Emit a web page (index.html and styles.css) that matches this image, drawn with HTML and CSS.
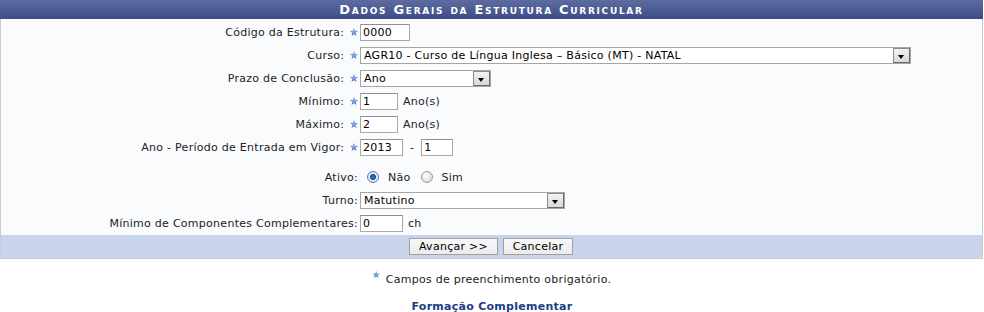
FILE: index.html
```html
<!DOCTYPE html>
<html>
<head>
<meta charset="utf-8">
<link rel="stylesheet" href="styles.css">
</head>
<body>
<div class="form">
  <div class="caption">Dados Gerais da Estrutura Curricular</div>
  <div class="fields">
    <div class="row"><div class="lbl">Código da Estrutura: <span class="star"></span></div><div class="val"><span class="inp w50">0000</span></div></div>
    <div class="row"><div class="lbl">Curso: <span class="star"></span></div><div class="val"><span class="sel w550"><span class="opt">AGR10 - Curso de Língua Inglesa – Básico (MT) - NATAL</span><span class="arrow"></span></span></div></div>
    <div class="row"><div class="lbl">Prazo de Conclusão: <span class="star"></span></div><div class="val"><span class="sel w130"><span class="opt">Ano</span><span class="arrow"></span></span></div></div>
    <div class="row"><div class="lbl">Mínimo: <span class="star"></span></div><div class="val"><span class="inp w38">1</span><span class="unit">Ano(s)</span></div></div>
    <div class="row"><div class="lbl">Máximo: <span class="star"></span></div><div class="val"><span class="inp w38">2</span><span class="unit">Ano(s)</span></div></div>
    <div class="row"><div class="lbl">Ano - Período de Entrada em Vigor: <span class="star"></span></div><div class="val"><span class="inp w43">2013</span><span class="dash">-</span><span class="inp w32">1</span></div></div>
    <div class="row tall"><div class="lbl">Ativo:</div><div class="val radios"><span class="radio on"></span><span class="rtext">Não</span><span class="radio"></span><span class="rtext">Sim</span></div></div>
    <div class="row"><div class="lbl">Turno:</div><div class="val"><span class="sel w204"><span class="opt">Matutino</span><span class="arrow"></span></span></div></div>
    <div class="row"><div class="lbl">Mínimo de Componentes Complementares:</div><div class="val"><span class="inp w43">0</span><span class="unit">ch</span></div></div>
  </div>
  <div class="actions">
    <span class="btn b1">Avançar &gt;&gt;</span>
    <span class="btn b2">Cancelar</span>
  </div>
</div>
<p class="note"><span class="star small"></span>Campos de preenchimento obrigatório.</p>
<p class="link">Formação Complementar</p>
</body>
</html>
```
FILE: styles.css
```css
html, body { margin: 0; padding: 0; background: #fff; }
body { font-family: "DejaVu Sans", Verdana, sans-serif; font-size: 11px; letter-spacing: 0.27px; color: #222; }
.form { width: 983px; border: 1px solid #ccc; border-top: none; box-sizing: border-box; background: #f9fbfd; }
.caption { height: 19px; line-height: 19px; margin: 0 -1px; text-align: center; color: #fff; font-weight: bold; font-variant: small-caps; font-size: 13px; letter-spacing: 1.7px; background: linear-gradient(#5d6ca0, #3e4c86); }
.fields { padding-top: 2px; }
.row { display: grid; grid-template-columns: 357px 1fr; height: 23px; align-items: center; }
.row.tall { height: 30px; padding-top: 6px; box-sizing: border-box; }
.lbl { text-align: right; white-space: nowrap; }
.val { display: flex; align-items: center; padding-left: 2px; }
.star { display: inline-block; width: 8px; height: 8px; vertical-align: 0px; margin-left: 2px; background: radial-gradient(circle at 50% 40%, #8fb0e8, #2f5db8); clip-path: polygon(50% 0, 63% 35%, 100% 38%, 71% 60%, 81% 100%, 50% 77%, 19% 100%, 29% 60%, 0 38%, 37% 35%); }
.inp { display: inline-block; box-sizing: border-box; height: 17px; line-height: 15px; border: 1px solid #a9a9a9; border-top-color: #8f8f8f; background: #fff; padding-left: 2px; color: #000; }
.w50 { width: 50px; } .w38 { width: 38px; } .w43 { width: 43px; } .w32 { width: 32px; }
.unit { margin-left: 5px; }
.dash { margin: 0 7px; }
.sel { display: inline-flex; align-items: center; justify-content: space-between; box-sizing: border-box; height: 17px; border: 1px solid #a5a5a5; background: #fff; color: #000; padding-left: 3px; }
.w550 { width: 551px; } .w130 { width: 131px; } .w204 { width: 205px; }
.arrow { width: 17px; height: 15px; box-sizing: border-box; border: 1px solid #8c8c8c; border-right-color: #6a6a6a; border-bottom-color: #6a6a6a; background: linear-gradient(#f2f2f2, #d9d9d9); position: relative; }
.arrow::after { content: ""; position: absolute; left: 4px; top: 6px; border-left: 3.5px solid transparent; border-right: 3.5px solid transparent; border-top: 4px solid #000; }
.radios { padding-left: 9px; }
.radio { width: 12px; height: 12px; border-radius: 50%; box-sizing: border-box; border: 1px solid #9a9a9a; background: radial-gradient(circle at 40% 35%, #fff, #d0d0d0); }
.radio.on { border-color: #5c7ea8; background: radial-gradient(circle at 50% 50%, #2a86d8 0, #0b4f96 2.5px, #e8eef5 3.5px, #c4ccd6 100%); }
.rtext { margin-left: 9px; margin-right: 10px; }
.actions { height: 23px; background: #c8d4ec; display: flex; justify-content: center; align-items: center; gap: 5px; }
.btn { box-sizing: border-box; height: 17px; line-height: 15px; border: 1px solid #a0a0a0; background: linear-gradient(#f8f8f8, #ececec); color: #000; text-align: center; white-space: nowrap; }
.b1 { width: 89px; margin-left: -1px; }
.b2 { width: 70px; }
.note { text-align: center; margin: 12px 0 0; height: 16px; line-height: 16px; color: #222; }
.star.small { width: 7px; height: 7px; margin: 0 6px 0 0; vertical-align: 5px; }
.link { text-align: center; margin: 13px 0 0; font-weight: bold; color: #203c86; }
```
